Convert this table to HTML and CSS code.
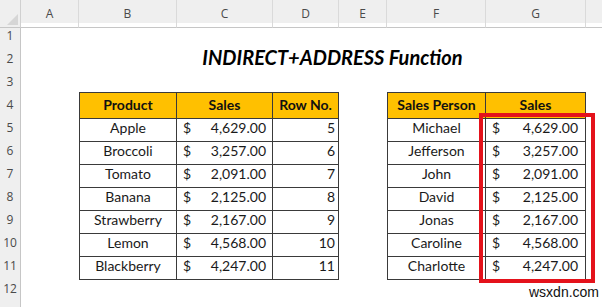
FILE: index.html
```html
<!DOCTYPE html>
<html>
<head>
<meta charset="utf-8">
<link rel="stylesheet" href="styles.css">
</head>
<body>
<div class="sheet">
  <div class="row colhead">
    <div class="corner"><span class="tri"></span></div>
    <div class="ch">A</div><div class="ch">B</div><div class="ch">C</div><div class="ch">D</div>
    <div class="ch">E</div><div class="ch">F</div><div class="ch">G</div><div class="ch last"></div>
  </div>
  <div class="row"><div class="rh">1</div></div>
  <div class="row"><div class="rh">2</div><div class="c"></div><div class="title">INDIRECT+ADDRESS Function</div></div>
  <div class="row"><div class="rh">3</div></div>
  <div class="row">
    <div class="rh">4</div><div class="c"></div>
    <div class="t th tl">Product</div><div class="t th">Sales</div><div class="t th">Row No.</div>
    <div class="c"></div>
    <div class="t th tl">Sales Person</div><div class="t th">Sales</div>
  </div>
  <div class="row">
    <div class="rh">5</div><div class="c"></div>
    <div class="t tl ctr">Apple</div><div class="t num"><span>$</span><span>4,629.00</span></div><div class="t rn">5</div>
    <div class="c"></div>
    <div class="t tl ctr">Michael</div><div class="t num g"><span>$</span><span>4,629.00</span></div>
  </div>
  <div class="row">
    <div class="rh">6</div><div class="c"></div>
    <div class="t tl ctr">Broccoli</div><div class="t num"><span>$</span><span>3,257.00</span></div><div class="t rn">6</div>
    <div class="c"></div>
    <div class="t tl ctr">Jefferson</div><div class="t num g"><span>$</span><span>3,257.00</span></div>
  </div>
  <div class="row">
    <div class="rh">7</div><div class="c"></div>
    <div class="t tl ctr">Tomato</div><div class="t num"><span>$</span><span>2,091.00</span></div><div class="t rn">7</div>
    <div class="c"></div>
    <div class="t tl ctr">John</div><div class="t num g"><span>$</span><span>2,091.00</span></div>
  </div>
  <div class="row">
    <div class="rh">8</div><div class="c"></div>
    <div class="t tl ctr">Banana</div><div class="t num"><span>$</span><span>2,125.00</span></div><div class="t rn">8</div>
    <div class="c"></div>
    <div class="t tl ctr">David</div><div class="t num g"><span>$</span><span>2,125.00</span></div>
  </div>
  <div class="row">
    <div class="rh">9</div><div class="c"></div>
    <div class="t tl ctr">Strawberry</div><div class="t num"><span>$</span><span>2,167.00</span></div><div class="t rn">9</div>
    <div class="c"></div>
    <div class="t tl ctr">Jonas</div><div class="t num g"><span>$</span><span>2,167.00</span></div>
  </div>
  <div class="row">
    <div class="rh">10</div><div class="c"></div>
    <div class="t tl ctr">Lemon</div><div class="t num"><span>$</span><span>4,568.00</span></div><div class="t rn">10</div>
    <div class="c"></div>
    <div class="t tl ctr">Caroline</div><div class="t num g"><span>$</span><span>4,568.00</span></div>
  </div>
  <div class="row">
    <div class="rh">11</div><div class="c"></div>
    <div class="t tl ctr">Blackberry</div><div class="t num"><span>$</span><span>4,247.00</span></div><div class="t rn">11</div>
    <div class="c"></div>
    <div class="t tl ctr">Charlotte</div><div class="t num g"><span>$</span><span>4,247.00</span></div>
  </div>
  <div class="row"><div class="rh">12</div></div>
  <div class="row"><div class="rh"></div></div>
  <div class="highlight"></div>
  <div class="watermark">wsxdn.com</div>
</div>
</body>
</html>
```
FILE: styles.css
```css
html, body {
  margin: 0;
  padding: 0;
  background: #ffffff;
}
.sheet {
  position: relative;
  width: 602px;
  height: 307px;
  overflow: hidden;
  font-family: Lato, "Open Sans", sans-serif;
  font-size: 14px;
  color: #1a1a1a;
}
.row {
  display: grid;
  grid-template-columns: 21px 58px 98px 96px 66px 48px 99px 100px 1fr;
  height: 23px;
}
.colhead {
  height: 23px;
  background: #efefef;
}
.corner {
  position: relative;
  border-right: 1px solid #d0d0d0;
  border-bottom: 1px solid #c6c6c6;
  box-sizing: border-box;
}
.tri {
  position: absolute;
  right: 2px;
  bottom: 2px;
  width: 0;
  height: 0;
  border-left: 11px solid transparent;
  border-bottom: 11px solid #d6d6d6;
}
.ch {
  box-sizing: border-box;
  border-right: 1px solid #dadada;
  border-bottom: 1px solid #c6c6c6;
  text-align: center;
  font-family: "Open Sans", sans-serif;
  font-size: 12px;
  color: #4a4a4a;
  line-height: 27px;
}
.ch.last {
  border-right: none;
}
.rh {
  box-sizing: border-box;
  background: #efefef;
  border-right: 1px solid #c6c6c6;
  border-bottom: 1px solid #dadada;
  text-align: center;
  font-family: "Open Sans", sans-serif;
  font-size: 12px;
  color: #4a4a4a;
  line-height: 26px;
}
.c {
  min-width: 0;
}
.title {
  grid-column: 3 / 9;
  text-align: center;
  font-weight: 700;
  font-style: italic;
  font-size: 20px;
  line-height: 20px;
  color: #000;
  padding-top: 1px;
}
.t {
  box-sizing: border-box;
  border-right: 1px solid #3a3a3a;
  border-bottom: 1px solid #3a3a3a;
  line-height: 20px;
  padding-top: 3px;
  white-space: nowrap;
}
.tl {
  border-left: 1px solid #3a3a3a;
}
.th {
  background: #ffc000;
  border-top: 1px solid #3a3a3a;
  font-weight: 700;
  text-align: center;
  padding-top: 2px;
  color: #111;
}
.ctr {
  text-align: center;
}
.num {
  display: flex;
  justify-content: space-between;
  padding-left: 6px;
  padding-right: 6px;
}
.num.g {
  padding-right: 7px;
}
.rn {
  text-align: right;
  padding-right: 3px;
}
.highlight {
  position: absolute;
  left: 479px;
  top: 113px;
  width: 116px;
  height: 170px;
  box-sizing: border-box;
  border: 4px solid #e4121b;
}
.watermark {
  position: absolute;
  left: 529px;
  top: 284px;
  font-family: "Liberation Sans", Arial, sans-serif;
  font-size: 14px;
  color: #111;
}
```
